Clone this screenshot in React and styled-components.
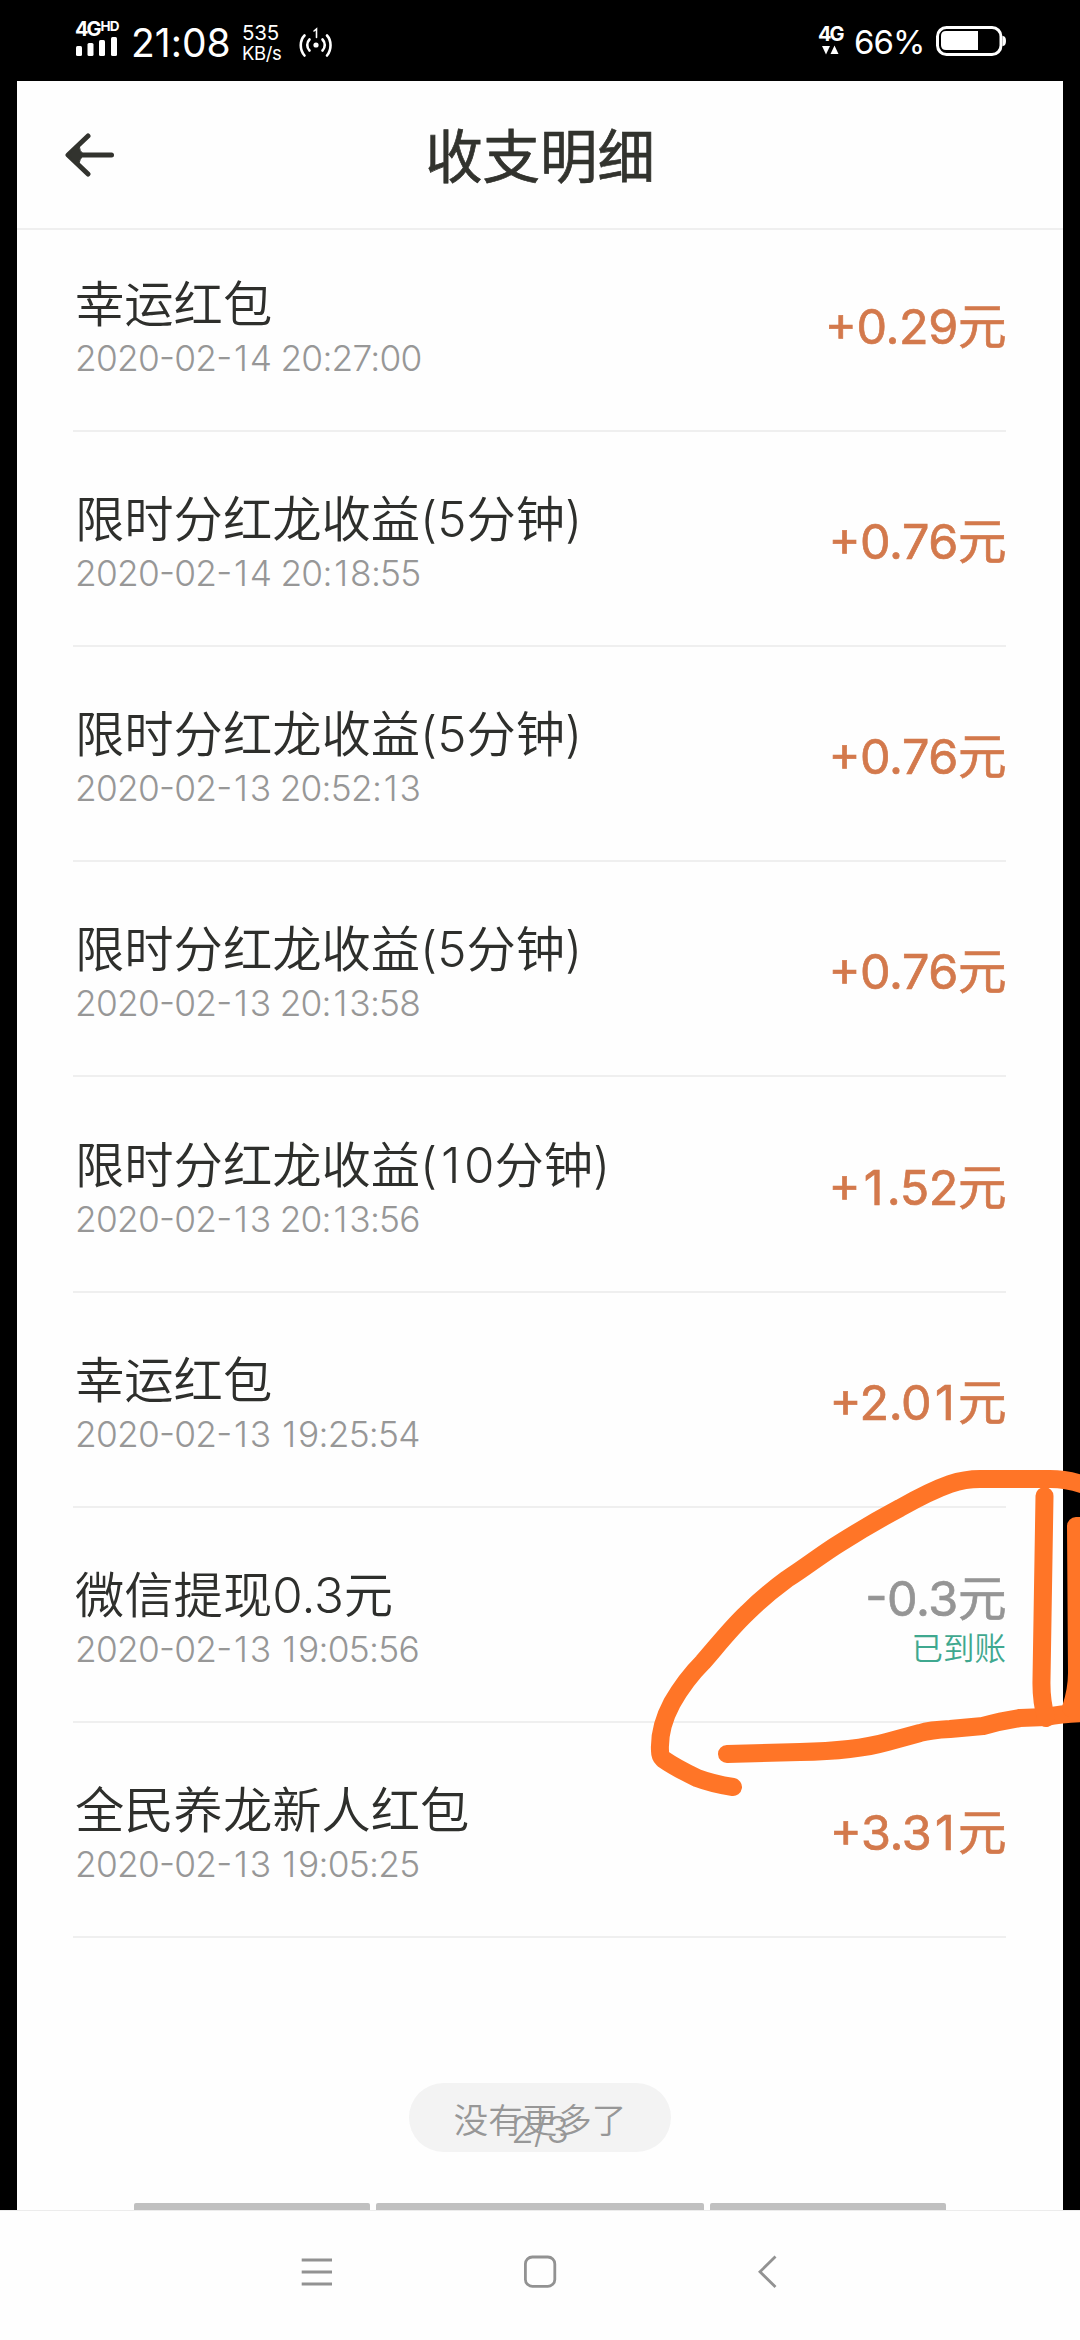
import React from "react";
import styled, { createGlobalStyle } from "styled-components";

const GlobalStyle = createGlobalStyle`
  * { box-sizing: border-box; }
  html, body { margin: 0; padding: 0; }
  body {
    background: #fff;
    font-family: Inter, "Noto Sans CJK SC", sans-serif;
  }
`;

const Screen = styled.div`
  position: relative;
  display: flex;
  flex-direction: column;
  width: 1080px;
  height: 2340px;
  overflow: hidden;
  background: #000;
`;

const StatusBar = styled.div`
  flex: none;
  display: flex;
  justify-content: space-between;
  align-items: flex-start;
  height: 81px;
  padding: 20px 74px 0 75px;
  background: #000;
  color: #fff;
`;

const StatusGroup = styled.div`
  display: flex;
  align-items: flex-start;
`;

const Signal = styled.div`
  display: flex;
  flex-direction: column;
  width: 44px;
  margin-right: 12px;
`;

const NetworkLabel = styled.div`
  display: flex;
  align-items: flex-start;
  height: 17px;
  font-size: 20px;
  font-weight: 700;
  line-height: 19px;
  letter-spacing: -2px;
`;

const NetworkSuffix = styled.span`
  font-size: 13.5px;
  line-height: 13px;
  letter-spacing: -0.9px;
  margin-left: 1px;
`;

const Clock = styled.div`
  width: 110px;
  font-size: 39px;
  line-height: 46px;
  letter-spacing: 0;
  font-feature-settings: "calt" 0;
`;

const Speed = styled.div`
  width: 56px;
  margin-left: 1px;
  padding-top: 3px;
`;

const SpeedLine = styled.div`
  font-size: ${(p) => p.$size}px;
  line-height: 20px;
  letter-spacing: ${(p) => p.$track}px;
`;

const HotspotIcon = styled.svg`
  margin-top: 5px;
`;

const NetworkRight = styled.div`
  display: flex;
  flex-direction: column;
  width: 36px;
  padding-top: 5px;
`;

const Percent = styled.div`
  width: 82px;
  padding-top: 3px;
  font-size: 33px;
  line-height: 38px;
  letter-spacing: -1px;
`;

const BatteryIcon = styled.svg`
  margin-top: 5px;
`;

const Page = styled.main`
  flex: 1;
  display: flex;
  flex-direction: column;
  margin: 0 17px;
  background: #fefefe;
  min-height: 0;
`;

const Header = styled.header`
  flex: none;
  display: grid;
  grid-template-columns: 120px 1fr 120px;
  align-items: center;
  height: 149px;
  padding: 0 48px;
  border-bottom: 2px solid #efefef;
`;

const Title = styled.h1`
  margin: 0;
  padding-top: 5px;
  text-align: center;
  font-size: 57.4px;
  line-height: 70px;
  font-weight: 400;
  -webkit-text-stroke: 0.7px currentColor;
  color: #32332e;
`;

const List = styled.ul`
  list-style: none;
  margin: 0 57px 0 56px;
  padding: 0;
`;

const Row = styled.li`
  display: flex;
  justify-content: space-between;
  align-items: flex-end;
  height: 215.15px;
  border-bottom: 2px solid #efefef;
  padding-left: 2px;

  &:first-child { height: 202px; }
`;

const Info = styled.div`
  padding-bottom: 51px;
`;

const Name = styled.div`
  font-size: 49.3px;
  line-height: 70px;
  color: #2e2f2c;
  font-weight: 350;
  font-feature-settings: "calt" 0;
  white-space: nowrap;
`;

const Time = styled.div`
  font-size: 35.3px;
  line-height: 40px;
  font-weight: 300;
  letter-spacing: -0.75px;
  color: #979797;
  white-space: nowrap;
`;

const DatePart = styled.span`
  font-feature-settings: "case";
`;

const ClockPart = styled.span`
  font-feature-settings: "calt" 0;
`;

const WideOne = styled.span`
  padding: 0 0.075em;
`;

const Figures = styled.div`
  display: flex;
  flex-direction: column;
  align-items: flex-end;
  padding-bottom: ${(p) => (p.$settled ? 52 : 73)}px;
`;

const Amount = styled.div`
  font-size: 48.5px;
  line-height: 61px;
  font-weight: 400;
  letter-spacing: -0.4px;
  -webkit-text-stroke: 0.7px currentColor;
  font-feature-settings: "case";
  color: ${(p) => (p.$out ? "#959595" : "#d3794c")};
`;

const Settled = styled.div`
  font-size: 31.5px;
  line-height: 40px;
  font-weight: 350;
  color: #3fa88f;
`;

const Footer = styled.div`
  display: flex;
  flex: 1;
  flex-direction: column;
  align-items: center;
  justify-content: space-between;
  padding-top: 145px;
`;

const EndPill = styled.div`
  position: relative;
  display: flex;
  align-items: center;
  justify-content: center;
  width: 262px;
  height: 69px;
  padding-top: 2px;
  border-radius: 35px;
  background: #f3f3f3;
  color: #979797;
  font-size: 34.5px;
  font-weight: 350;
`;

const PageCount = styled.span`
  position: absolute;
  left: 0;
  right: 0;
  top: 27px;
  text-align: center;
  font-size: 37px;
  line-height: 40px;
  font-weight: 350;
`;

const Segments = styled.div`
  display: grid;
  grid-template-columns: 236px 328px 236px;
  gap: 6px;
  height: 7px;
`;

const Segment = styled.span`
  background: #c0c0c0;
  border-radius: 2px 2px 0 0;
`;

const NavBar = styled.nav`
  flex: none;
  display: flex;
  align-items: flex-start;
  justify-content: center;
  gap: 190px;
  height: 130px;
  padding-top: 44px;
  background: #fefefe;
  border-top: 1px solid #ececec;
`;

const Doodle = styled.svg`
  position: absolute;
  left: 640px;
  top: 1450px;
  pointer-events: none;
`;

const ENTRIES = [
  { name: "幸运红包", date: "2020-02-14", clock: "20:27:00", amount: "+0.29元" },
  { name: "限时分红龙收益(5分钟)", date: "2020-02-14", clock: "20:18:55", amount: "+0.76元" },
  { name: "限时分红龙收益(5分钟)", date: "2020-02-13", clock: "20:52:13", amount: "+0.76元" },
  { name: "限时分红龙收益(5分钟)", date: "2020-02-13", clock: "20:13:58", amount: "+0.76元" },
  { name: "限时分红龙收益(10分钟)", date: "2020-02-13", clock: "20:13:56", amount: "+1.52元" },
  { name: "幸运红包", date: "2020-02-13", clock: "19:25:54", amount: "+2.01元" },
  { name: "微信提现0.3元", date: "2020-02-13", clock: "19:05:56", amount: "-0.3元", status: "已到账" },
  { name: "全民养龙新人红包", date: "2020-02-13", clock: "19:05:25", amount: "+3.31元" },
];

// Gives the narrow "1" nearly the same advance as the other digits.
function Figure({ children }) {
  return children
    .split(/(1)/)
    .map((part, i) => (part === "1" ? <WideOne key={i}>1</WideOne> : part));
}

function Entry({ name, date, clock, amount, status }) {
  return (
    <Row>
      <Info>
        <Name><Figure>{name}</Figure></Name>
        <Time>
          <DatePart><Figure>{date}</Figure></DatePart>{" "}
          <ClockPart><Figure>{clock}</Figure></ClockPart>
        </Time>
      </Info>
      <Figures $settled={Boolean(status)}>
        <Amount $out={Boolean(status)}><Figure>{amount}</Figure></Amount>
        {status && <Settled>{status}</Settled>}
      </Figures>
    </Row>
  );
}

export default function App() {
  return (
    <>
      <GlobalStyle />
      <Screen>
        <StatusBar>
          <StatusGroup>
            <Signal>
              <NetworkLabel>
                4G<NetworkSuffix>HD</NetworkSuffix>
              </NetworkLabel>
              <svg width="44" height="19" viewBox="0 0 44 19" fill="#fff">
                <rect x="1" y="9" width="6" height="10" rx="1.5" />
                <rect x="12.5" y="6" width="6" height="13" rx="1.5" />
                <rect x="24" y="3" width="6" height="16" rx="1.5" />
                <rect x="36" y="0" width="6" height="19" rx="1.5" />
              </svg>
            </Signal>
            <Clock>21:08</Clock>
            <Speed>
              <SpeedLine $size={20.5} $track={-0.2}>535</SpeedLine>
              <SpeedLine $size={18.5} $track={-0.4}>KB/s</SpeedLine>
            </Speed>
            <HotspotIcon width="34" height="34" viewBox="0 0 34 34" fill="none" stroke="#fff" strokeWidth="2.6" strokeLinecap="round">
              <circle cx="18" cy="20" r="2.6" fill="#fff" stroke="none" />
              <path d="M11.500 14.500 C8.500 17.500 8.500 22.500 11.500 25.500" />
              <path d="M24.500 14.500 C27.500 17.500 27.500 22.500 24.500 25.500" />
              <path d="M6.500 10.500 C1.500 15.500 1.500 25 6.500 30.500" />
              <path d="M29 10.500 C33.700 15.500 33.700 25 29 30.500" />
              <path d="M16 6 L18.500 4 V12.500" strokeWidth="1.6" />
            </HotspotIcon>
          </StatusGroup>
          <StatusGroup>
            <NetworkRight>
              <NetworkLabel>4G</NetworkLabel>
              <svg width="26" height="13" viewBox="0 0 26 13" fill="#fff">
                <path d="M4 4 H12 L8 12.5 Z" />
                <path d="M12.5 12 H20.5 L16.5 3.5 Z" />
              </svg>
            </NetworkRight>
            <Percent>66%</Percent>
            <BatteryIcon width="70" height="31" viewBox="0 0 70 31">
              <rect x="1.5" y="2.5" width="63.5" height="27" rx="9" fill="none" stroke="#fff" strokeWidth="3" />
              <path d="M10 6 H42 V25 H10 Q5 25 5 20 V11 Q5 6 10 6 Z" fill="#fff" />
              <path d="M66.5 11 Q70 11 70 16 Q70 21 66.5 21 Z" fill="#fff" />
            </BatteryIcon>
          </StatusGroup>
        </StatusBar>

        <Page>
          <Header>
            <svg width="50" height="44" viewBox="0 0 50 44" fill="none" stroke="#32332e" strokeWidth="5" strokeLinecap="round" strokeLinejoin="round">
              <path d="M23 3 L3 22 L23 41" />
              <path d="M12 22 H46.5" />
              <path d="M3 22 L14 12 Q14 18 19 22 Q14 26 14 32 Z" fill="#32332e" strokeWidth="1" />
            </svg>
            <Title>收支明细</Title>
          </Header>
          <List>
            {ENTRIES.map((e) => (
              <Entry key={e.date + e.clock} {...e} />
            ))}
          </List>
          <Footer>
            <EndPill>
              没有更多了
              <PageCount>2/3</PageCount>
            </EndPill>
            <Segments>
              <Segment />
              <Segment />
              <Segment />
            </Segments>
          </Footer>
        </Page>

        <NavBar>
          <svg width="34" height="34" viewBox="0 0 34 34" fill="none" stroke="#929292" strokeWidth="2.8">
            <path d="M2.7 5 H33 M2.7 17 H33 M2.7 29 H33" />
          </svg>
          <svg width="34" height="34" viewBox="0 0 34 34" fill="none" stroke="#929292" strokeWidth="2.8">
            <rect x="2.4" y="2" width="29.4" height="29.4" rx="7" />
          </svg>
          <svg width="34" height="34" viewBox="0 0 34 34" fill="none" stroke="#929292" strokeWidth="2.8">
            <path d="M28.5 1.500 L13 16.800 L28.5 32" />
          </svg>
        </NavBar>

        <Doodle width="440" height="360" viewBox="640 1450 440 360" fill="none" stroke="#ff7527" strokeWidth="18" strokeLinecap="round" strokeLinejoin="round">
          <path d="M733 1787 Q713 1784 697 1778 Q676 1768 663 1759 Q660 1756 660 1751 C659 1733 664 1718 672 1703 C680 1689 690 1675 703 1662 C717 1646 731 1628 747 1613 C759 1601 772 1590 787 1579 C806 1567 822 1554 840 1543 Q870 1524 900 1508 Q930 1491 950 1484 Q965 1479 980 1479 H1050 Q1070 1479 1090 1487" />
          <path d="M727 1754 L800 1752 Q855 1751 887 1742 L920 1733 Q930 1730 950 1729 L983 1726 Q1000 1721 1020 1718 L1046 1717 Q1064 1713 1090 1713" />
          <path d="M1044.500 1496 Q1043 1600 1041.500 1680 Q1041 1700 1046 1718" />
          <path d="M1076 1526 L1077 1673 Q1077 1690 1071 1708 H1090 V1526 Z" fill="#ff7527" />
        </Doodle>
      </Screen>
    </>
  );
}
